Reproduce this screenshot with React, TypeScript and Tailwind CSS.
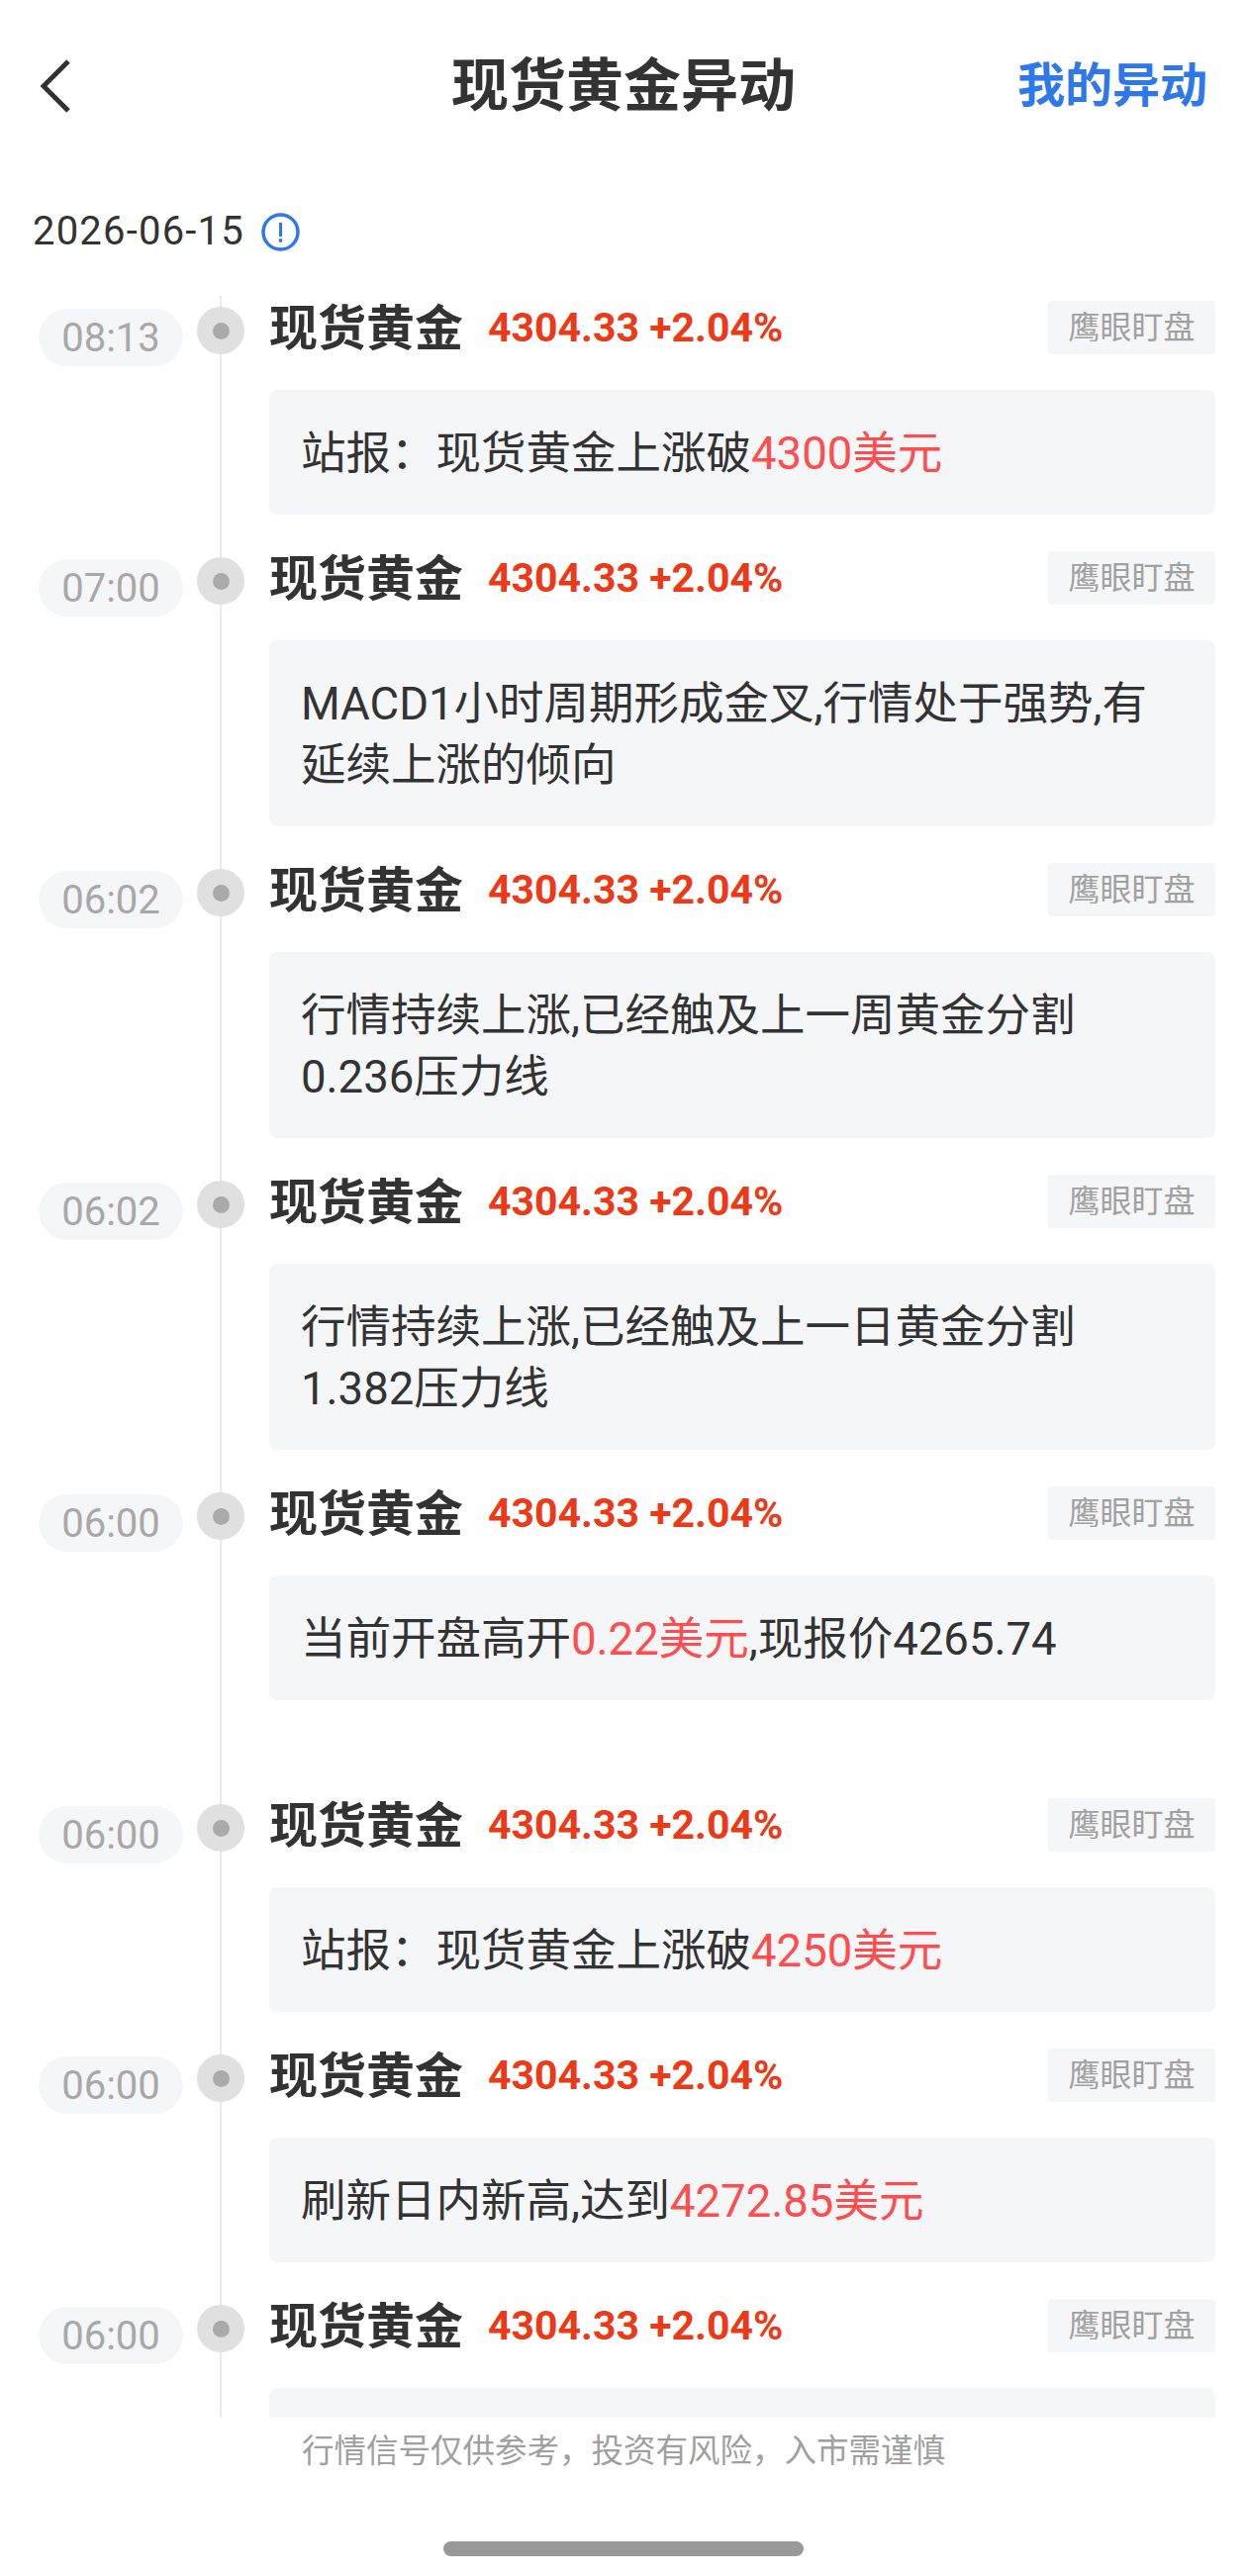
const rows = [
  { time: "08:13", parts: [["站报：现货黄金上涨破"], ["4300美元", "red"]] },
  { time: "07:00", parts: [["MACD1小时周期形成金叉,行情处于强势,有延续上涨的倾向"]] },
  { time: "06:02", parts: [["行情持续上涨,已经触及上一周黄金分割0.236压力线"]] },
  { time: "06:02", parts: [["行情持续上涨,已经触及上一日黄金分割1.382压力线"]] },
  { time: "06:00", parts: [["当前开盘高开"], ["0.22美元", "red"], [",现报价4265.74"]], tall: true },
  { time: "06:00", parts: [["站报：现货黄金上涨破"], ["4250美元", "red"]] },
  { time: "06:00", parts: [["刷新日内新高,达到"], ["4272.85美元", "red"]] },
  // last card is cut off by the list before its text starts
  { time: "06:00", parts: [["\u00a0"]] },
];

export default function App() {
  return (
    <div className="w-[1260px] h-[2603px] bg-white text-[#333] font-[Roboto,'Noto_Sans_CJK_SC',sans-serif] flex flex-col overflow-hidden">
      {/* header */}
      <div className="h-[168px] shrink-0 pt-[6px] grid grid-cols-[1fr_auto_1fr] items-center">
        <div className="pl-[41px]">
          <svg width="30" height="54" viewBox="0 0 30 54" fill="none" className="block">
            <path d="M28 2 L3 27 L28 52" stroke="#333" strokeWidth="5" />
          </svg>
        </div>
        <div className="text-[58px] font-bold leading-none">现货黄金异动</div>
        <div className="pr-[40px] text-right text-[48px] font-bold leading-none text-[#2f78e8]">我的异动</div>
      </div>

      {/* date */}
      <div className="mt-[36px] h-[60px] shrink-0 pl-[33px] flex items-center gap-[17px]">
        <span className="text-[40px] leading-none tracking-[1.2px]">2026-06-15</span>
        <svg width="39" height="39" viewBox="0 0 39 39" fill="none">
          <circle cx="19.5" cy="19.5" r="17.5" stroke="#2f78e8" strokeWidth="3.5" />
          <path d="M19.5 10 V24" stroke="#2f78e8" strokeWidth="3" />
          <circle cx="19.5" cy="28" r="1.9" fill="#2f78e8" />
        </svg>
      </div>

      {/* timeline */}
      <div className="relative mt-[35px] h-[2144px] shrink-0 overflow-hidden pt-[5px]">
        <div className="absolute left-[222px] top-0 bottom-0 w-[2px] bg-[#ebebeb]" />
        {rows.map((row, i) => (
          <div key={i} className={row.tall ? "relative flex items-start pl-[39px] mb-[99px]" : "relative flex items-start pl-[39px] mb-[37px]"}>
            <div className="mt-[8px] w-[146px] h-[58px] pt-[2px] rounded-[29px] bg-[#f5f6f8] flex items-center justify-center text-[40px] leading-none text-[#a8a8a8]">
              {row.time}
            </div>
            <div className="mt-[6px] ml-[14px] w-[48px] h-[48px] rounded-full bg-[#e0e0e0] flex items-center justify-center">
              <div className="w-[17px] h-[17px] rounded-full bg-[#aaaaaa]" />
            </div>
            <div className="ml-[25px] w-[956px]">
              <div className="h-[54px] flex items-center">
                <span className="pt-[2px] text-[49px] font-bold leading-none">现货黄金</span>
                <span className="ml-[25px] text-[41px] font-bold leading-none text-[#eb3a17]">4304.33 +2.04%</span>
                <span className="ml-auto h-[54px] w-[169px] rounded-[4px] bg-[#f5f6f8] flex items-center justify-center text-[32px] leading-none text-[#a0a0a0]">
                  鹰眼盯盘
                </span>
              </div>
              <div className="mt-[36px] rounded-[8px] bg-[#f5f6f8] pl-[32px] pr-[40px] pt-[34px] pb-[30px] text-[45.5px] leading-[62px]">
                {row.parts.map((p, j) => (
                  <span key={j} className={p[1] ? "text-[#ff4d4f]" : ""}>{p[0]}</span>
                ))}
              </div>
            </div>
          </div>
        ))}
      </div>

      {/* footer note */}
      <div className="h-[68px] shrink-0 pl-[305px] flex items-center text-[32.5px] leading-none text-[#a0a0a0]">
        行情信号仅供参考，投资有风险，入市需谨慎
      </div>

      {/* home indicator */}
      <div className="mt-[57px] mx-auto w-[364px] h-[15px] rounded-full bg-[#999]" />
    </div>
  );
}
